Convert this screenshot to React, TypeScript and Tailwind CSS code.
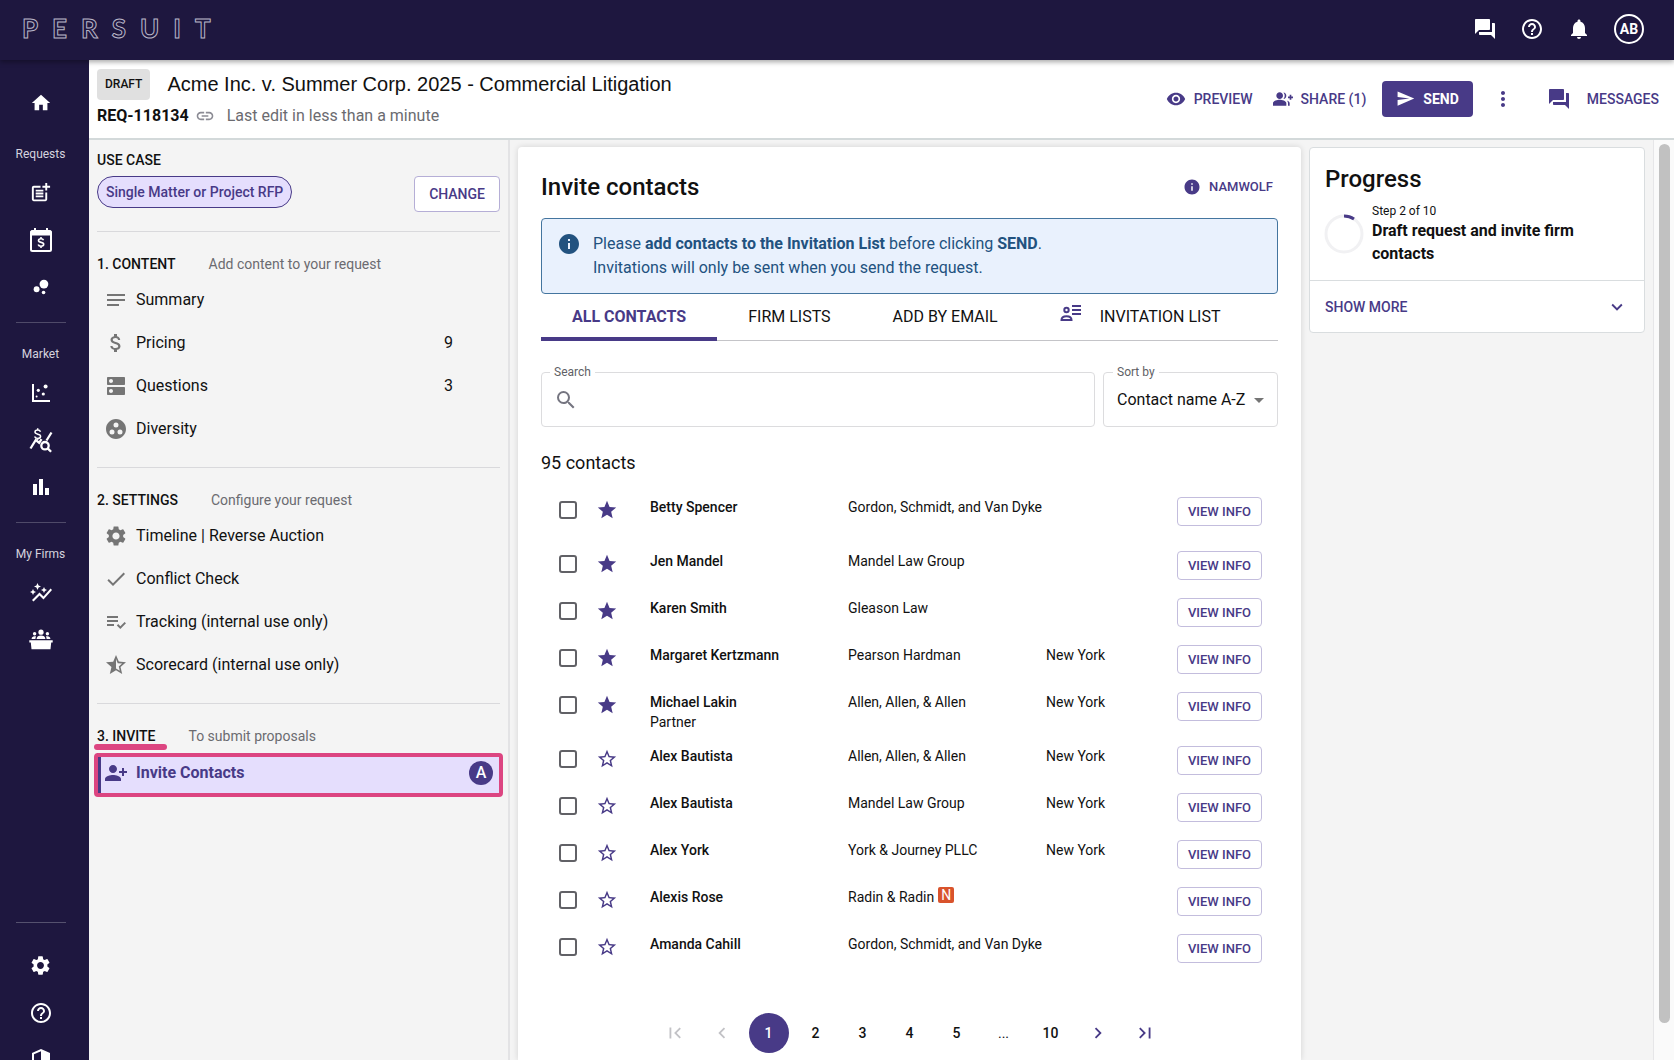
import type { ReactNode } from "react";
import {
	MdArrowDropDown,
	MdAttachMoney,
	MdAutoGraph,
	MdBarChart,
	MdBubbleChart,
	MdCheck,
	MdChevronLeft,
	MdChevronRight,
	MdDns,
	MdExpandMore,
	MdFirstPage,
	MdForum,
	MdGroupAdd,
	MdGroupWork,
	MdHelpOutline,
	MdHome,
	MdInfo,
	MdLastPage,
	MdLink,
	MdMoreVert,
	MdNotes,
	MdNotifications,
	MdPersonAddAlt1,
	MdPlaylistAddCheck,
	MdPostAdd,
	MdSearch,
	MdSecurity,
	MdSend,
	MdSettings,
	MdStar,
	MdStarBorder,
	MdStarHalf,
	MdVisibility,
} from "react-icons/md";

function CalendarMoneyIcon() {
	return (
		<svg width="24" height="26" viewBox="0 0 24 26" fill="none" stroke="currentColor">
			<rect x="2" y="4" width="20" height="20" rx="1.5" strokeWidth="2" />
			<path d="M2 4h20v4H2z" fill="currentColor" strokeWidth="1" />
			<path d="M6 1v4M18 1v4" strokeWidth="2" />
			<path d="M14.5 13.2c-.3-1-1.200-1.500-2.500-1.500-1.500 0-2.500.7-2.500 1.800 0 2.600 5.200 1.200 5.200 3.800 0 1.100-1.100 1.900-2.700 1.900-1.500 0-2.500-.6-2.800-1.700M12 10v1.700M12 19.200v1.700" strokeWidth="1.600" />
		</svg>
	);
}

function ScatterIcon() {
	return (
		<svg width="20" height="20" viewBox="0 0 20 20" fill="currentColor">
			<path d="M1 1h2v16h16v2H1z" />
			<circle cx="14.600" cy="3.600" r="2" />
			<circle cx="7.300" cy="7.300" r="1.600" />
			<circle cx="12.300" cy="11" r="1.600" />
			<circle cx="5.600" cy="13.600" r="1" />
		</svg>
	);
}

function MoneyStatsIcon() {
	return (
		<svg width="24" height="26" viewBox="0 0 24 26" fill="none" stroke="currentColor" strokeWidth="2">
			<path d="M11.500 4.800c-.4-1.100-1.400-1.700-2.800-1.700-1.600 0-2.700.8-2.700 2 0 2.900 5.600 1.300 5.600 4.200 0 1.300-1.200 2.100-2.900 2.100-1.600 0-2.700-.7-3.100-1.900M8.700 1.200v1.900M8.700 11.400v1.500" strokeWidth="1.500" />
			<path d="M1.500 21.500 6.800 13l3.400 2.800 2.300-3.600M22.500 5.500 17.500 13.500" strokeWidth="2.300" />
			<circle cx="16" cy="18.700" r="3.700" strokeWidth="2.300" />
			<path d="m18.700 21.400 3.400 3.400" strokeWidth="2.300" />
		</svg>
	);
}

function PodiumIcon() {
	return (
		<svg width="24" height="22" viewBox="0 0 24 22" fill="currentColor">
			<circle cx="12" cy="3.200" r="2.600" />
			<circle cx="5.600" cy="4.700" r="1.700" />
			<circle cx="18.400" cy="4.700" r="1.700" />
			<path d="M7.600 10c0-2.400 2-3.500 4.400-3.500s4.400 1.100 4.400 3.500zM2.600 10c0-1.900 1.300-2.800 3-2.800.6 0 1.100.1 1.500.3-.5.700-.7 1.500-.7 2.500zM21.400 10c0-1.900-1.300-2.800-3-2.800-.6 0-1.100.1-1.500.3.5.7.7 1.500.7 2.500z" />
			<path d="M.3 11.300h23.400v2.200h-1.500l-.7 6.800H2.500l-.7-6.800H.3z" />
		</svg>
	);
}

function InvitationIcon() {
	return (
		<svg width="22" height="18" viewBox="0 0 22 18" fill="none" stroke="currentColor" strokeWidth="2">
			<circle cx="6.500" cy="6" r="2.200" />
			<path d="M1.500 16c0-2.600 2-3.800 5-3.800s5 1.200 5 3.800z" />
			<path d="M12 2h9M12 6h9M12 10h9" />
		</svg>
	);
}

function ProgressRing() {
	return (
		<svg width="40" height="40" viewBox="0 0 40 40" fill="none" strokeWidth="3">
			<circle cx="20" cy="20" r="18" stroke="#f1f1f3" />
			<path d="M20 2a18 18 0 0 1 10 3" stroke="#483a87" />
		</svg>
	);
}

const navGroups = [
	{
		label: "Requests",
		items: [
			{ name: "New request", icon: <MdPostAdd size={23} /> },
			{ name: "Rates", icon: <CalendarMoneyIcon /> },
			{ name: "Explore", icon: <MdBubbleChart size={22} /> },
		],
	},
	{
		label: "Market",
		items: [
			{ name: "Benchmarks", icon: <ScatterIcon /> },
			{ name: "Rate search", icon: <MoneyStatsIcon /> },
			{ name: "Reports", icon: <MdBarChart size={24} /> },
		],
	},
	{
		label: "My Firms",
		items: [
			{ name: "Insights", icon: <MdAutoGraph size={24} /> },
			{ name: "Firms", icon: <PodiumIcon /> },
		],
	},
];

const contentSteps = [
	{ label: "Summary", icon: <MdNotes size={24} /> },
	{ label: "Pricing", icon: <MdAttachMoney size={24} />, count: 9 },
	{ label: "Questions", icon: <MdDns size={24} />, count: 3 },
	{ label: "Diversity", icon: <MdGroupWork size={24} /> },
];

const settingsSteps = [
	{ label: "Timeline | Reverse Auction", icon: <MdSettings size={24} /> },
	{ label: "Conflict Check", icon: <MdCheck size={24} /> },
	{ label: "Tracking (internal use only)", icon: <MdPlaylistAddCheck size={24} /> },
	{ label: "Scorecard (internal use only)", icon: <MdStarHalf size={24} /> },
];

const contacts = [
	{ name: "Betty Spencer", firm: "Gordon, Schmidt, and Van Dyke", starred: true, tall: true },
	{ name: "Jen Mandel", firm: "Mandel Law Group", starred: true },
	{ name: "Karen Smith", firm: "Gleason Law", starred: true },
	{ name: "Margaret Kertzmann", firm: "Pearson Hardman", city: "New York", starred: true },
	{ name: "Michael Lakin", role: "Partner", firm: "Allen, Allen, & Allen", city: "New York", starred: true, tall: true },
	{ name: "Alex Bautista", firm: "Allen, Allen, & Allen", city: "New York" },
	{ name: "Alex Bautista", firm: "Mandel Law Group", city: "New York" },
	{ name: "Alex York", firm: "York & Journey PLLC", city: "New York" },
	{ name: "Alexis Rose", firm: "Radin & Radin", namwolf: true },
	{ name: "Amanda Cahill", firm: "Gordon, Schmidt, and Van Dyke" },
];

function TopBar() {
	return (
		<header className="relative z-10 flex h-[60px] shrink-0 items-center justify-between bg-[#1e173f] pr-[30px] pl-[22px] text-white shadow-[0_2px_5px_rgba(0,0,0,0.35)]">
			<div className="flex gap-[14px] pb-1 font-[Lato,sans-serif] text-[26px] leading-8 font-bold text-[#1e173f] [-webkit-text-stroke:1px_#b9b6c8]">
				{"PERSUIT".split("").map((letter) => (
					<span key={letter}>{letter}</span>
				))}
			</div>
			<div className="flex items-center gap-[23px] pb-0.5">
				<button aria-label="Messages"><MdForum size={24} /></button>
				<button aria-label="Help"><MdHelpOutline size={24} /></button>
				<button aria-label="Notifications"><MdNotifications size={24} /></button>
				<button className="h-[30px] w-[30px] rounded-full border-2 border-white text-sm leading-none font-bold">
					AB
				</button>
			</div>
		</header>
	);
}

function NavButton({ name, children }: { name: string; children: ReactNode }) {
	return (
		<a href="#" aria-label={name} className="flex h-[47px] w-full items-center justify-center">
			{children}
		</a>
	);
}

function Sidebar() {
	return (
		<nav className="flex w-[89px] shrink-0 flex-col items-center overflow-hidden bg-[#1e173f] pr-2 text-white">
			<div className="mt-[19px] mb-[-3px] w-full shrink-0">
				<NavButton name="Home"><MdHome size={22} /></NavButton>
			</div>
			{navGroups.map((group, index) => (
				<div key={group.label} className="flex w-full shrink-0 flex-col items-center">
					{index > 0 && <hr className="mt-3 w-[50px] border-[#4f4a69]" />}
					<div className="mt-[21px] mb-[5px] text-xs leading-5 text-[#d5d3de]">{group.label}</div>
					{group.items.map((item) => (
						<NavButton key={item.name} name={item.name}>{item.icon}</NavButton>
					))}
				</div>
			))}
			<div className="mt-auto -mb-[23px] flex w-full shrink-0 flex-col items-center">
				<hr className="mb-[19px] w-[50px] border-[#55516e]" />
				<NavButton name="Settings"><MdSettings size={23} /></NavButton>
				<NavButton name="Support"><MdHelpOutline size={24} /></NavButton>
				<NavButton name="Security"><MdSecurity size={24} /></NavButton>
			</div>
		</nav>
	);
}

function RequestHeader() {
	return (
		<div className="flex h-20 shrink-0 items-center justify-between border-b-2 border-[#d3d9da] bg-white pr-[15px] pl-2">
			<div className="pb-0.5">
				<div className="flex items-center gap-[17px]">
					<span className="rounded bg-[#e0e0e0] px-2 text-xs leading-[31px] font-medium">DRAFT</span>
					<h1 className="font-['Liberation_Sans',Arial,sans-serif] text-xl leading-7">
						Acme Inc. v. Summer Corp. 2025 - Commercial Litigation
					</h1>
				</div>
				<div className="mt-1 flex items-center text-base leading-6">
					<span className="font-bold">REQ-118134</span>
					<button aria-label="Copy link" className="ml-1.5 text-[#8b8b94]"><MdLink size={20} /></button>
					<span className="ml-3 text-[#6b6b70]">Last edit in less than a minute</span>
				</div>
			</div>
			<div className="flex items-center pb-px text-sm font-medium text-[#483a87]">
				<button className="flex items-center gap-2"><MdVisibility size={20} />PREVIEW</button>
				<button className="ml-5 flex items-center gap-2"><MdGroupAdd size={20} />SHARE (1)</button>
				<button className="ml-4 flex h-9 items-center gap-2 rounded bg-[#483a87] px-[14px] font-bold text-white"><MdSend size={19} />SEND</button>
				<button aria-label="More options" className="ml-[18px]"><MdMoreVert size={24} /></button>
				<button className="ml-8 flex items-center gap-4"><MdForum size={24} />MESSAGES</button>
			</div>
		</div>
	);
}

type Step = { label: string; icon: ReactNode; count?: number };

function StepSection({ title, hint, steps }: { title: string; hint: string; steps: Step[] }) {
	return (
		<section className="border-t border-[#d9d9dc] pt-[18px] pb-[17px]">
			<div className="flex h-7 items-center gap-[33px] text-sm">
				<h2 className="font-medium">{title}</h2>
				<span className="text-[#6b6b70]">{hint}</span>
			</div>
			{steps.map((step) => (
				<a key={step.label} href="#" className="flex h-[43px] items-center pr-[47px] pl-[7px]">
					<span className="flex w-8 text-[#757575]">{step.icon}</span>
					<span className="flex-1 text-base">{step.label}</span>
					<span className="text-base">{step.count}</span>
				</a>
			))}
		</section>
	);
}

function StepsPanel() {
	return (
		<aside className="w-[421px] shrink-0 border-r-2 border-[#e3e3e5] pr-2 pl-2">
			<div className="pt-2.5 pb-[19px]">
				<h2 className="text-sm leading-5 font-medium">USE CASE</h2>
				<div className="mt-1.5 flex items-start justify-between">
					<span className="rounded-full border border-[#483a87] bg-[#e5defd] px-2 text-sm leading-[30px] font-medium text-[#483a87]">
						Single Matter or Project RFP
					</span>
					<button className="h-9 rounded border border-[#b5aed6] bg-white px-3.5 text-sm font-medium text-[#483a87]">CHANGE</button>
				</div>
			</div>
			<StepSection title="1. CONTENT" hint="Add content to your request" steps={contentSteps} />
			<StepSection title="2. SETTINGS" hint="Configure your request" steps={settingsSteps} />
			<section className="border-t border-[#d9d9dc] pt-[18px]">
				<div className="flex h-7 items-center gap-[33px] text-sm">
					<h2 className="relative font-medium">
						3. INVITE
						<span className="absolute top-[18px] -right-3 -left-[3px] h-1.5 rounded-sm bg-[#dc4581]" />
					</h2>
					<span className="text-[#6b6b70]">To submit proposals</span>
				</div>
				<a href="#" className="relative mt-[3px] flex h-10 items-center border-l-4 border-[#483a87] bg-[#e5defd] pr-[7px] pl-[3px] text-[#483a87]">
					<span className="flex w-8"><MdPersonAddAlt1 size={24} /></span>
					<span className="flex-1 text-base font-bold">Invite Contacts</span>
					<span className="flex h-6 w-6 items-center justify-center rounded-full bg-[#483a87] text-base leading-none font-medium text-white">A</span>
					<span className="absolute top-0 -right-[3px] -bottom-1 -left-[7px] rounded-sm border-4 border-[#dc4581]" />
				</a>
			</section>
		</aside>
	);
}

function Tabs() {
	return (
		<div role="tablist" className="flex h-[47px] border-b border-[#c4c4c8] text-base">
			<button role="tab" aria-selected="true" className="-mb-px border-b-4 border-[#483a87] px-[31px] pt-0.5 font-bold text-[#483a87]">ALL CONTACTS</button>
			<button role="tab" aria-selected="false" className="px-[31px]">FIRM LISTS</button>
			<button role="tab" aria-selected="false" className="px-[31px]">ADD BY EMAIL</button>
			<button role="tab" aria-selected="false" className="flex items-center gap-[18px] px-[31px]">
				<span className="pb-2 text-[#483a87]"><InvitationIcon /></span>
				INVITATION LIST
			</button>
		</div>
	);
}

function Filters() {
	return (
		<div className="mt-[23px] flex gap-2 text-xs">
			<fieldset className="flex h-[63px] min-w-0 flex-1 items-center rounded border border-[#dcdcde] px-3">
				<legend className="-ml-1 px-1 leading-4 text-[#5f5f66]"><label htmlFor="search">Search</label></legend>
				<MdSearch size={24} className="mb-1.5 shrink-0 text-[#757580]" />
				<input id="search" type="text" className="ml-2 h-10 min-w-0 flex-1 text-base outline-none" />
			</fieldset>
			<fieldset className="relative h-[63px] w-[175px] rounded border border-[#dcdcde] px-[13px]">
				<legend className="-ml-1 px-1 leading-4 text-[#5f5f66]"><label htmlFor="sort">Sort by</label></legend>
				<select id="sort" className="h-10 w-full appearance-none bg-transparent text-base outline-none">
					<option>Contact name A-Z</option>
				</select>
				<MdArrowDropDown size={24} className="pointer-events-none absolute top-2 right-1.5 text-[#757575]" />
			</fieldset>
		</div>
	);
}

function ContactsTable() {
	return (
		<table className="mt-3.5 w-full table-fixed text-sm leading-5">
			<colgroup>
				<col className="w-[55px]" />
				<col className="w-[54px]" />
				<col />
				<col />
				<col className="w-[131px]" />
				<col className="w-[101px]" />
			</colgroup>
			<tbody>
				{contacts.map((contact, index) => (
					<tr key={index} className={contact.tall ? "h-[54px] align-top" : "h-[47px] align-top"}>
						<td className="pt-3 pl-[18px]">
							<input
								type="checkbox"
								aria-label={`Select ${contact.name}`}
								className="block h-[18px] w-[18px] appearance-none rounded-[3px] border-2 border-[#616166]"
							/>
						</td>
						<td className="pt-2.5">
							<button aria-label={`Favorite ${contact.name}`} className="block text-[#483a87]">
								{contact.starred ? <MdStar size={22} /> : <MdStarBorder size={22} />}
							</button>
						</td>
						<td className="pt-2">
							<div className="font-medium">{contact.name}</div>
							{contact.role && <div>{contact.role}</div>}
						</td>
						<td className="pt-2 whitespace-nowrap">
							{contact.firm}
							{contact.namwolf && (
								<span className="ml-1 inline-block h-4 w-4 rounded-xs bg-[#d9532c] text-center align-top leading-4 text-white">N</span>
							)}
						</td>
						<td className="pt-2">{contact.city}</td>
						<td className="pt-2">
							<button className="block h-[29px] w-[85px] rounded border border-[#c3bddd] text-[13px] font-medium text-[#483a87]">
								VIEW INFO
							</button>
						</td>
					</tr>
				))}
			</tbody>
		</table>
	);
}

function Pagination() {
	return (
		<div className="mt-10 flex items-center justify-center gap-[7px] text-sm font-medium">
			<button aria-label="First page" disabled className="flex h-10 w-10 items-center justify-center text-[#c2c2c6]"><MdFirstPage size={22} /></button>
			<button aria-label="Previous page" disabled className="flex h-10 w-10 items-center justify-center text-[#c2c2c6]"><MdChevronLeft size={22} /></button>
			<button aria-current="page" className="h-10 w-10 rounded-full bg-[#483a87] text-white">1</button>
			{["2", "3", "4", "5"].map((page) => (
				<button key={page} className="h-10 w-10">{page}</button>
			))}
			<span className="w-10 text-center font-normal">...</span>
			<button className="h-10 w-10">10</button>
			<button aria-label="Next page" className="flex h-10 w-10 items-center justify-center text-[#483a87]"><MdChevronRight size={22} /></button>
			<button aria-label="Last page" className="flex h-10 w-10 items-center justify-center text-[#483a87]"><MdLastPage size={22} /></button>
		</div>
	);
}

function InviteCard() {
	return (
		<main className="mt-[7px] ml-2 min-w-0 flex-1 rounded-t bg-white px-[23px] pt-[25px] shadow-[0_0_6px_rgba(0,0,0,0.14)]">
			<div className="flex h-[30px] items-center justify-between">
				<h2 className="text-2xl font-medium">Invite contacts</h2>
				<button className="mr-[5px] flex items-center gap-2 text-[13px] font-medium text-[#483a87]"><MdInfo size={18} />NAMWOLF</button>
			</div>
			<div className="mt-4 flex gap-3 rounded border border-[#44759f] bg-[#e9f1fd] px-[15px] py-[13px] text-base text-[#22527f]">
				<MdInfo size={24} className="shrink-0" />
				<p>
					Please <strong>add contacts to the Invitation List</strong> before clicking <strong>SEND</strong>.
					<br />
					Invitations will only be sent when you send the request.
				</p>
			</div>
			<Tabs />
			<Filters />
			<div className="mt-6 text-lg leading-6">95 contacts</div>
			<ContactsTable />
			<Pagination />
		</main>
	);
}

function ProgressCard() {
	return (
		<aside className="mt-[7px] ml-2 h-fit w-[336px] shrink-0 rounded border border-[#d9dddf] bg-white">
			<div className="border-b border-[#d9dddf] px-[15px] pt-[15px] pb-[15px]">
				<h2 className="text-2xl font-medium">Progress</h2>
				<div className="mt-2 flex items-center gap-2">
					<div className="-ml-px shrink-0"><ProgressRing /></div>
					<div>
						<div className="text-xs leading-4">Step 2 of 10</div>
						<div className="text-base leading-[23px] font-bold">Draft request and invite firm contacts</div>
					</div>
				</div>
			</div>
			<button className="flex h-[51px] w-full items-center justify-between pr-4 pl-[15px] text-sm font-medium text-[#483a87]">
				SHOW MORE
				<MdExpandMore size={22} />
			</button>
		</aside>
	);
}

export default function App() {
	return (
		<div className="flex h-screen flex-col overflow-hidden bg-[#f4f4f4] font-[Roboto,sans-serif] text-[#111111]">
			<TopBar />
			<div className="flex min-h-0 flex-1">
				<Sidebar />
				<div className="flex min-w-0 flex-1 flex-col">
					<RequestHeader />
					<div className="flex min-h-0 flex-1">
						<StepsPanel />
						<InviteCard />
						<ProgressCard />
						<div className="ml-2 w-[21px] shrink-0 border-l border-[#e6e6e8] bg-[#fafafa] pt-1 pr-1 pb-[37px] pl-[5px]">
							<div className="h-full rounded-full bg-[#c1c1c1]" />
						</div>
					</div>
				</div>
			</div>
		</div>
	);
}
